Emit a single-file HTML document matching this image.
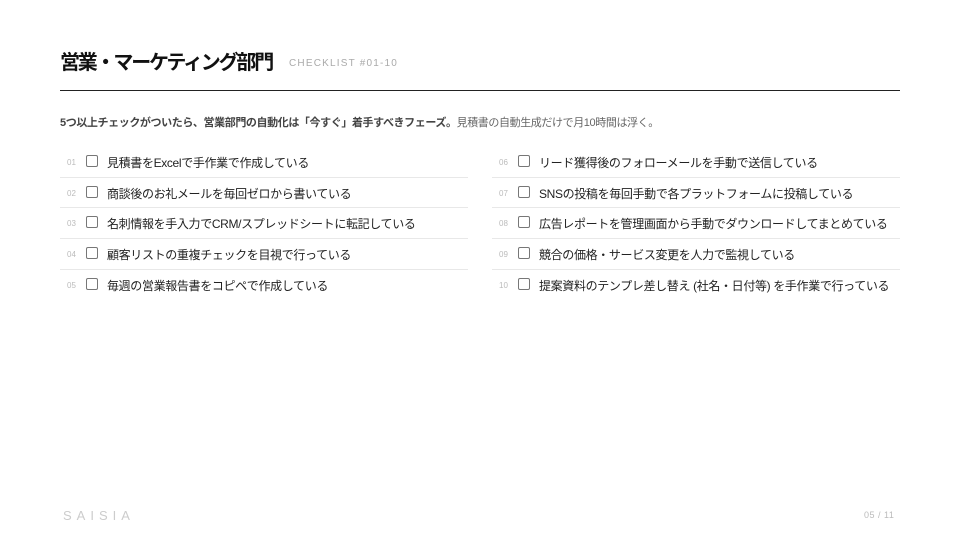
<!DOCTYPE html>
<html><head><meta charset="utf-8"><style>
*{margin:0;padding:0;box-sizing:border-box}
body{width:960px;height:540px;background:#fff;position:relative;overflow:hidden;font-family:"Liberation Sans","Noto Sans CJK JP",sans-serif;color:#222}
.title{position:absolute;left:60px;top:46px;font-size:20px;font-weight:700;color:#111;letter-spacing:-2.2px;white-space:nowrap}
.tag{position:absolute;left:289px;top:58px;font-size:10px;letter-spacing:1.2px;color:#aaa}
.rule{position:absolute;left:60px;top:90px;width:840px;height:1px;background:#222}
.sub{position:absolute;left:60px;top:114px;font-size:11px;color:#666;white-space:nowrap;letter-spacing:-0.4px}
.sub b{color:#444;font-weight:700}
.col{position:absolute;top:147px;width:408px}
.row{height:30.7px;border-bottom:1px solid #e8e8e8;position:relative;font-size:12px;white-space:nowrap;letter-spacing:-0.35px}
.row:last-child{border-bottom:none}
.n{position:absolute;left:7px;top:11px;font-size:8px;color:#bbb;letter-spacing:0}
.cb{position:absolute;left:26px;top:8px;width:12px;height:12px;border:1px solid #777;border-radius:2px}
.t{position:absolute;left:47px;top:7px;color:#222}
.logo{position:absolute;left:63px;top:508px;font-size:13px;letter-spacing:5px;color:#ccc;font-weight:300}
.pg{position:absolute;left:864px;top:510px;font-size:9px;color:#bbb;letter-spacing:.5px}
</style></head><body>
<div class="title">営業・マーケティング部門</div>
<div class="tag">CHECKLIST #01-10</div>
<div class="rule"></div>
<div class="sub"><b>5つ以上チェックがついたら、営業部門の自動化は「今すぐ」着手すべきフェーズ。</b>見積書の自動生成だけで月10時間は浮く。</div>
<div class="col" style="left:60px">
<div class="row"><span class="n">01</span><span class="cb"></span><span class="t">見積書をExcelで手作業で作成している</span></div>
<div class="row"><span class="n">02</span><span class="cb"></span><span class="t">商談後のお礼メールを毎回ゼロから書いている</span></div>
<div class="row"><span class="n">03</span><span class="cb"></span><span class="t">名刺情報を手入力でCRM/スプレッドシートに転記している</span></div>
<div class="row"><span class="n">04</span><span class="cb"></span><span class="t">顧客リストの重複チェックを目視で行っている</span></div>
<div class="row"><span class="n">05</span><span class="cb"></span><span class="t">毎週の営業報告書をコピペで作成している</span></div>
</div>
<div class="col" style="left:492px">
<div class="row"><span class="n">06</span><span class="cb"></span><span class="t">リード獲得後のフォローメールを手動で送信している</span></div>
<div class="row"><span class="n">07</span><span class="cb"></span><span class="t">SNSの投稿を毎回手動で各プラットフォームに投稿している</span></div>
<div class="row"><span class="n">08</span><span class="cb"></span><span class="t">広告レポートを管理画面から手動でダウンロードしてまとめている</span></div>
<div class="row"><span class="n">09</span><span class="cb"></span><span class="t">競合の価格・サービス変更を人力で監視している</span></div>
<div class="row"><span class="n">10</span><span class="cb"></span><span class="t">提案資料のテンプレ差し替え (社名・日付等) を手作業で行っている</span></div>
</div>
<div class="logo">SAISIA</div>
<div class="pg">05 / 11</div>
</body></html>
